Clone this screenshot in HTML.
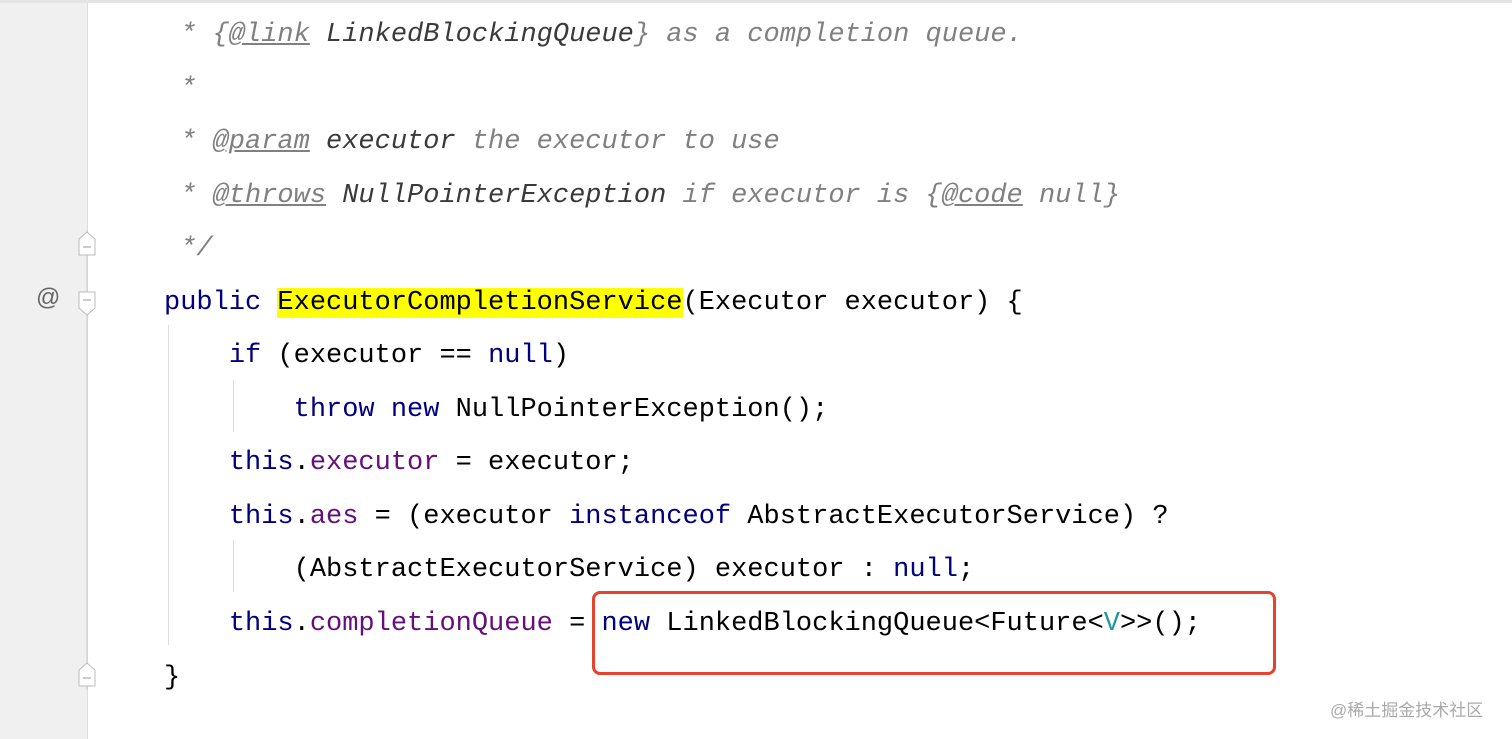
<!DOCTYPE html>
<html><head><meta charset="utf-8"><style>
body{margin:0;width:1512px;height:739px;overflow:hidden;background:#fff;position:relative;font-family:"Liberation Mono",monospace;}
.g{position:absolute;left:0;top:0;width:87px;height:739px;background:#f0f0f0;border-right:1px solid #ddd;}
.top{position:absolute;left:0;top:0;width:1512px;height:3px;background:#e4e4e4;}
.l{position:absolute;left:164px;height:54px;line-height:54px;font-size:27px;white-space:pre;color:#000;}
.c{color:#808080;font-style:italic}
.t{color:#808080;font-style:italic;text-decoration:underline}
.d{color:#3a3a3a;font-style:italic}
.k{color:#000080}
.f{color:#660e7a}
.v{color:#20999d}
.hl{background:#ffff00}
.ig{position:absolute;width:1px;background:#ddd}
</style></head><body>
<div class="g"></div><div class="top"></div>
<div style="position:absolute;left:36px;top:284px;font-size:24px;color:#666;font-family:'Liberation Sans',sans-serif">@</div>
<svg style="position:absolute;left:76px;top:230px" width="22" height="460">
<line x1="11" y1="0" x2="11" y2="460" stroke="#ccc"/>
<path d="M3 9 L11 2 L19 9 L19 25 L3 25 Z" fill="#fff" stroke="#bbb"/><line x1="7" y1="17" x2="15" y2="17" stroke="#999"/>
<path d="M3 62 L19 62 L19 78 L11 85 L3 78 Z" fill="#fff" stroke="#bbb"/><line x1="7" y1="70" x2="15" y2="70" stroke="#999"/>
<path d="M3 440 L11 433 L19 440 L19 456 L3 456 Z" fill="#fff" stroke="#bbb"/><line x1="7" y1="448" x2="15" y2="448" stroke="#999"/>
</svg>
<div class="ig" style="left:168px;top:325px;height:320px"></div>
<div class="ig" style="left:233px;top:380px;height:52px"></div>
<div class="ig" style="left:233px;top:540px;height:52px"></div>
<div class="l" style="top:8px"><span class="c"> * </span><span class="c">{</span><span class="t">@link</span><span class="d"> LinkedBlockingQueue</span><span class="c">} as a completion queue.</span></div>
<div class="l" style="top:62px"><span class="c"> *</span></div>
<div class="l" style="top:115px"><span class="c"> * </span><span class="t">@param</span><span class="d"> executor</span><span class="c"> the executor to use</span></div>
<div class="l" style="top:169px"><span class="c"> * </span><span class="t">@throws</span><span class="d"> NullPointerException</span><span class="c"> if executor is {</span><span class="t">@code</span><span class="c"> null}</span></div>
<div class="l" style="top:222px"><span class="c"> */</span></div>
<div class="l" style="top:276px"><span class="k">public</span> <span class="hl">ExecutorCompletionService</span>(Executor executor) {</div>
<div class="l" style="top:329px">    <span class="k">if</span> (executor == <span class="k">null</span>)</div>
<div class="l" style="top:383px">        <span class="k">throw new</span> NullPointerException();</div>
<div class="l" style="top:436px">    <span class="k">this</span>.<span class="f">executor</span> = executor;</div>
<div class="l" style="top:490px">    <span class="k">this</span>.<span class="f">aes</span> = (executor <span class="k">instanceof</span> AbstractExecutorService) ?</div>
<div class="l" style="top:543px">        (AbstractExecutorService) executor : <span class="k">null</span>;</div>
<div class="l" style="top:597px">    <span class="k">this</span>.<span class="f">completionQueue</span> = <span class="k">new</span> LinkedBlockingQueue&lt;Future&lt;<span class="v">V</span>&gt;&gt;();</div>
<div class="l" style="top:651px">}</div>
<div style="position:absolute;left:592px;top:591px;width:678px;height:78px;border:3px solid #e5432d;border-radius:8px"></div>
<div style="position:absolute;left:1330px;top:696px;font-size:17px;color:#aaa;font-family:'Liberation Sans','Noto Sans CJK SC',sans-serif">@稀土掘金技术社区</div>
</body></html>
